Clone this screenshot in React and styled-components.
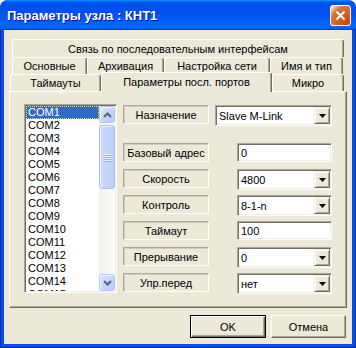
import React from "react";
import styled, { createGlobalStyle } from "styled-components";

const Global = createGlobalStyle`
  html, body { margin: 0; padding: 0; background: #ffffff; }
  body {
    font-family: "Liberation Sans", Arial, sans-serif;
    font-size: 11px;
    color: #000;
  }
  * { box-sizing: border-box; }
`;

const Window = styled.div`
  width: 356px;
  height: 348px;
  display: flex;
  flex-direction: column;
  border-radius: 8px 8px 0 0;
  overflow: hidden;
  background: #0831d9;
`;

const TitleBar = styled.div`
  height: 30px;
  flex: none;
  display: flex;
  align-items: center;
  padding: 0 5px 0 7px;
  background: linear-gradient(
    180deg,
    #0997ff,
    #0053ee 8%,
    #0050ee 40%,
    #0066ff 88%,
    #0066ff 93%,
    #005bff 95%,
    #003dd7 96%,
    #003dd7
  );
`;

const Title = styled.div`
  flex: 1;
  color: #fff;
  font-weight: bold;
  font-size: 13px;
  text-shadow: 1px 1px #0f1089;
  white-space: nowrap;
  padding-top: 1px;
`;

const CloseButton = styled.div`
  width: 21px;
  height: 21px;
  border: 1px solid #fff;
  border-radius: 3px;
  display: flex;
  align-items: center;
  justify-content: center;
  background: radial-gradient(
    circle at 90% 90%,
    #cc4600 0,
    #dc6527 55%,
    #cd7546 70%,
    #ffccb2 90%,
    #fff 100%
  );
`;

const Frame = styled.div`
  flex: 1;
  display: flex;
  padding: 0 4px 4px 4px;
  background: #0b4fe2;
  box-shadow: inset 1px 0 #0030b8, inset -1px 0 #0030b8, inset 0 -1px #0022a0;
`;

const Client = styled.div`
  flex: 1;
  display: flex;
  flex-direction: column;
  background: #ece9d8;
  padding: 9px 5px 0 5px;
`;

const TabControl = styled.div`
  display: flex;
  flex-direction: column;
`;

const TabRow = styled.div`
  display: flex;
  align-items: flex-end;
  height: ${(p) => p.$h}px;
  margin-left: ${(p) => p.$indent}px;
`;

const Tab = styled.div`
  width: ${(p) => p.$w}px;
  height: ${(p) => (p.$selected ? "20px" : "100%")};
  margin-bottom: ${(p) => (p.$selected ? "-1px" : "0")};
  padding-bottom: ${(p) => (p.$selected ? "2px" : "0")};
  position: ${(p) => (p.$selected ? "relative" : "static")};
  z-index: ${(p) => (p.$selected ? 1 : "auto")};
  background: #ece9d8;
  border-top: 1px solid #fff;
  border-left: 1px solid #fff;
  border-right: 1px solid #716f64;
  box-shadow: inset -1px 0 #aca899;
  border-radius: 3px 3px 0 0;
  display: flex;
  align-items: center;
  justify-content: center;
  white-space: nowrap;
`;

const Panel = styled.div`
  height: 217px;
  border: 1px solid;
  border-color: #fff #716f64 #716f64 #fff;
  box-shadow: inset -1px -1px #aca899;
  padding: 12px 14px;
  display: flex;
  align-items: flex-start;
`;

const ListBox = styled.div`
  width: 93px;
  height: 189px;
  flex: none;
  background: #fff;
  border: 1px solid;
  border-color: #aca899 #fff #fff #aca899;
  box-shadow: inset 1px 1px #716f64, inset -1px -1px #f1efe2;
  padding: 1px;
  display: flex;
`;

const Items = styled.div`
  flex: 1;
  overflow: hidden;
`;

const Item = styled.div`
  height: 13px;
  line-height: 13px;
  padding-left: 2px;
  white-space: nowrap;
  background: ${(p) => (p.$selected ? "#316ac5" : "transparent")};
  color: ${(p) => (p.$selected ? "#fff" : "#000")};
  outline: ${(p) => (p.$selected ? "1px dotted #e8d890" : "none")};
  outline-offset: -1px;
`;

const ScrollBar = styled.div`
  width: 16px;
  flex: none;
  display: flex;
  flex-direction: column;
  background: linear-gradient(to right, #f3f1ec, #fefefb);
`;

const ScrollButton = styled.div`
  height: 17px;
  flex: none;
  border: 1px solid #b4c8f6;
  border-radius: 3px;
  background: linear-gradient(135deg, #dde7fe 0%, #c6d6fb 50%, #b5c9f6 100%);
  box-shadow: inset 1px 1px #f0f4ff;
  display: flex;
  align-items: center;
  justify-content: center;
`;

const Track = styled.div`
  flex: 1;
  padding-top: 2px;
`;

const Thumb = styled.div`
  height: 64px;
  border: 1px solid #a8bef5;
  border-radius: 3px;
  background: linear-gradient(to right, #cddbfd, #bccff9);
  box-shadow: inset 1px 1px #eef3ff;
  display: flex;
  flex-direction: column;
  align-items: center;
  justify-content: center;
  gap: 1px;
`;

const Grip = styled.div`
  width: 7px;
  height: 1px;
  background: #eef4ff;
  box-shadow: 0 1px #8caef0;
`;

const Form = styled.div`
  flex: 1;
  margin-left: 6px;
  padding-top: 1px;
  display: flex;
  flex-direction: column;
  gap: 6px;
`;

const FormRow = styled.div`
  display: flex;
  justify-content: space-between;
  align-items: flex-start;
  height: 20px;
  margin-bottom: ${(p) => p.$after || 0}px;
`;

const Label = styled.div`
  width: 86px;
  height: 19px;
  border: 1px solid;
  border-color: #aca899 #fff #fff #aca899;
  box-shadow: inset 1px 1px #cfccbd;
  display: flex;
  align-items: center;
  justify-content: center;
  white-space: nowrap;
  padding-top: 1px;
`;

const Field = styled.div`
  width: ${(p) => (p.$wide ? 117 : 95)}px;
  height: ${(p) => (p.$combo ? 21 : 19)}px;
  background: #fff;
  border: 1px solid;
  border-color: #aca899 #fff #fff #aca899;
  box-shadow: inset 1px 1px #716f64, inset -1px -1px #f1efe2;
  padding: 1px;
  display: flex;
`;

const FieldText = styled.div`
  flex: 1;
  padding-left: 2px;
  display: flex;
  align-items: center;
  white-space: nowrap;
`;

const DropButton = styled.div`
  width: 16px;
  flex: none;
  background: #ece9d8;
  border: 1px solid;
  border-color: #f1efe2 #716f64 #716f64 #f1efe2;
  box-shadow: inset 1px 1px #fff, inset -1px -1px #aca899;
  display: flex;
  align-items: center;
  justify-content: center;
`;

const ButtonRow = styled.div`
  display: flex;
  justify-content: flex-end;
  gap: 5px;
  margin-top: 7px;
  padding-right: 1px;
`;

const DialogButton = styled.button`
  width: ${(p) => p.$w}px;
  height: 23px;
  margin: 0;
  padding: 0;
  font: inherit;
  color: #000;
  background: #ece9d8;
  border: 1px solid ${(p) => (p.$default ? "#000" : "transparent")};
  box-shadow: ${(p) =>
    p.$default
      ? "inset 1px 1px #fff, inset -1px -1px #716f64, inset -2px -2px #aca899"
      : "inset 1px 1px #fff, inset -1px -1px #716f64, inset -2px -2px #aca899"};
  ${(p) =>
    !p.$default &&
    `border-color: #fff #716f64 #716f64 #fff; box-shadow: inset -1px -1px #aca899;`}
`;

const ArrowDown = () => (
  <svg width="7" height="4" viewBox="0 0 7 4">
    <polygon points="0,0 7,0 3.5,4" fill="#000" />
  </svg>
);

const Chevron = ({ up }) => (
  <svg width="9" height="6" viewBox="0 0 9 6">
    <polyline
      points={up ? "1,5 4.5,1.5 8,5" : "1,1 4.5,4.5 8,1"}
      fill="none"
      stroke="#4d6185"
      strokeWidth="2"
    />
  </svg>
);

const rows1 = [{ t: "Связь по последовательным интерфейсам", w: 332 }];
const rows2 = [
  { t: "Основные", w: 75 },
  { t: "Архивация", w: 77 },
  { t: "Настройка сети", w: 106 },
  { t: "Имя и тип", w: 73 },
];
const rows3 = [
  { t: "Таймауты", w: 91 },
  { t: "Параметры посл. портов", w: 171, sel: true },
  { t: "Микро", w: 72 },
];

const ports = Array.from({ length: 15 }, (_, i) => `COM${i + 1}`);

const fields = [
  { label: "Базовый адрес", value: "0" },
  { label: "Скорость", value: "4800", combo: true },
  { label: "Контроль", value: "8-1-n", combo: true },
  { label: "Таймаут", value: "100" },
  { label: "Прерывание", value: "0", combo: true },
  { label: "Упр.перед", value: "нет", combo: true },
];

export default function App() {
  return (
    <>
      <Global />
      <Window>
        <TitleBar>
          <Title>Параметры узла : КНТ1</Title>
          <CloseButton>
            <svg width="11" height="11" viewBox="0 0 11 11">
              <path d="M1.5 1.5 L9.5 9.5 M9.5 1.5 L1.5 9.5" stroke="#fff" strokeWidth="2" />
            </svg>
          </CloseButton>
        </TitleBar>
        <Frame>
          <Client>
            <TabControl>
              <TabRow $h={18} $indent={3}>
                {rows1.map((r) => (
                  <Tab key={r.t} $w={r.w}>{r.t}</Tab>
                ))}
              </TabRow>
              <TabRow $h={17} $indent={3}>
                {rows2.map((r) => (
                  <Tab key={r.t} $w={r.w}>{r.t}</Tab>
                ))}
              </TabRow>
              <TabRow $h={17} $indent={1}>
                {rows3.map((r) => (
                  <Tab key={r.t} $w={r.w} $selected={r.sel}>{r.t}</Tab>
                ))}
              </TabRow>
              <Panel>
                <ListBox>
                  <Items>
                    {ports.map((p, i) => (
                      <Item key={p} $selected={i === 0}>{p}</Item>
                    ))}
                  </Items>
                  <ScrollBar>
                    <ScrollButton><Chevron up /></ScrollButton>
                    <Track>
                      <Thumb>
                        <Grip />
                        <Grip />
                        <Grip />
                        <Grip />
                      </Thumb>
                    </Track>
                    <ScrollButton><Chevron /></ScrollButton>
                  </ScrollBar>
                </ListBox>
                <Form>
                  <FormRow $after={12}>
                    <Label>Назначение</Label>
                    <Field $wide $combo>
                      <FieldText>Slave M-Link</FieldText>
                      <DropButton><ArrowDown /></DropButton>
                    </Field>
                  </FormRow>
                  {fields.map((f) => (
                    <FormRow key={f.label}>
                      <Label>{f.label}</Label>
                      <Field $combo={f.combo}>
                        <FieldText>{f.value}</FieldText>
                        {f.combo && (
                          <DropButton><ArrowDown /></DropButton>
                        )}
                      </Field>
                    </FormRow>
                  ))}
                </Form>
              </Panel>
            </TabControl>
            <ButtonRow>
              <DialogButton $w={76} $default>OK</DialogButton>
              <DialogButton $w={75}>Отмена</DialogButton>
            </ButtonRow>
          </Client>
        </Frame>
      </Window>
    </>
  );
}
